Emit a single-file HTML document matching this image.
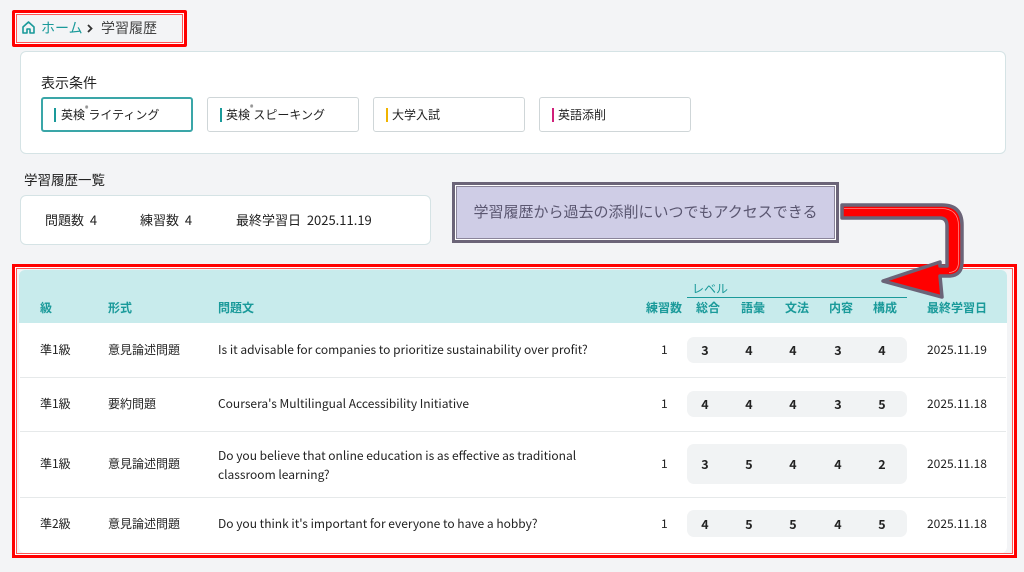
<!DOCTYPE html>
<html><head><meta charset="utf-8"><style>
*{margin:0;padding:0;box-sizing:border-box}
body{width:1024px;height:572px;background:#f3f4f6;font-family:"Noto Sans CJK JP","Liberation Sans",sans-serif;color:#222;position:relative;overflow:hidden;line-height:16px}
.a{position:absolute;white-space:nowrap}
.card{position:absolute;background:#fff;border:1px solid #d5e3e5;border-radius:6px}
.btn{position:absolute;top:97px;height:35px;width:152px;background:#fff;border:1px solid #cfd6d8;border-radius:3px;font-size:12px;line-height:33px;padding-left:18px}
.btn i{position:absolute;left:12px;top:10px;width:2px;height:14px}
.th{position:absolute;top:300px;font-size:12px;font-weight:bold;color:#1a9a9a;white-space:nowrap}
.c{transform:translateX(-50%)}
.row{position:absolute;left:20px;width:986px;border-bottom:1px solid #e6e9ea}
.t{position:absolute;font-size:12px;color:#222;white-space:nowrap}
.pill{position:absolute;left:667px;width:220px;background:#f1f3f4;border-radius:7px}
.n{position:absolute;font-size:12.5px;font-weight:bold;transform:translateX(-50%)}
sup{font-size:7px;vertical-align:top;line-height:20px}
</style></head><body>
<div class="a" style="left:12px;top:10px;width:175px;height:37px;border:3px solid #f00;border-radius:2px;box-shadow:inset 0 0 0 1px #fff,inset 0 0 0 2px #f55"></div>
<svg class="a" style="left:21px;top:20px" width="15" height="15" viewBox="0 0 15 15"><path d="M2 7L7.5 2L13 7V13H9V9H6V13H2Z" fill="none" stroke="#1a9a9a" stroke-width="1.6" stroke-linejoin="round"/></svg>
<div class="a" style="left:41px;top:20px;font-size:14px;color:#1a9a9a">ホーム</div>
<svg class="a" style="left:87px;top:24px" width="6" height="9" viewBox="0 0 6 9"><path d="M1 1L4.5 4.5L1 8" fill="none" stroke="#333" stroke-width="1.8"/></svg>
<div class="a" style="left:101px;top:20px;font-size:14px;color:#444">学習履歴</div>
<div class="card" style="left:20px;top:51px;width:986px;height:103px"></div>
<div class="a" style="left:41px;top:75px;font-size:14px">表示条件</div>
<div class="btn" style="left:41px;border:2px solid #3aa6a8;line-height:31px"><i style="background:#1a9a9a;left:11px;top:9px"></i>英検<sup>®</sup>ライティング</div>
<div class="btn" style="left:207px"><i style="background:#1a9a9a"></i>英検<sup>®</sup>スピーキング</div>
<div class="btn" style="left:373px"><i style="background:#f0b400"></i>大学入試</div>
<div class="btn" style="left:539px"><i style="background:#d0207a"></i>英語添削</div>
<div class="a" style="left:24px;top:171px;font-size:13.5px">学習履歴一覧</div>
<div class="card" style="left:20px;top:195px;width:411px;height:50px"></div>
<div class="a" style="left:45px;top:212px;font-size:13px">問題数&nbsp; 4</div>
<div class="a" style="left:140px;top:212px;font-size:13px">練習数&nbsp; 4</div>
<div class="a" style="left:236px;top:212px;font-size:13px">最終学習日&nbsp; 2025.11.19</div>
<div class="a" style="left:452px;top:182px;width:387px;height:61px;background:#cfcde6;border:3px solid #6b6478;box-shadow:inset 0 0 0 1px #fff,inset 0 0 0 2px #8a849a"></div>
<div class="a" style="left:452px;top:204px;width:387px;text-align:center;font-size:15px;color:#5a5670">学習履歴から過去の添削にいつでもアクセスできる</div>
<div class="a" style="left:12px;top:264px;width:1005px;height:294px;border:3px solid #f00;box-shadow:inset 0 0 0 1px #fff,inset 0 0 0 2px #f55"></div>
<div class="card" style="left:19px;top:270px;width:988px;height:283px;border:none;overflow:hidden">
<div style="position:absolute;left:0;top:0;width:988px;height:53px;background:#c8ebec"></div>
</div>
<div class="a" style="left:692px;top:281px;font-size:12px;color:#1a9a9a">レベル</div>
<div class="a" style="left:687px;top:297px;width:220px;height:1px;background:#1a9a9a"></div>
<div class="th" style="left:40px">級</div>
<div class="th" style="left:108px">形式</div>
<div class="th" style="left:218px">問題文</div>
<div class="th c" style="left:664px">練習数</div>
<div class="th c" style="left:708px">総合</div>
<div class="th c" style="left:753px">語彙</div>
<div class="th c" style="left:797px">文法</div>
<div class="th c" style="left:841px">内容</div>
<div class="th c" style="left:885px">構成</div>
<div class="th c" style="left:957px">最終学習日</div>

<div class="row" style="top:323px;height:55px">
<div class="t" style="left:20px;top:19px">準1級</div><div class="t" style="left:88px;top:19px">意見論述問題</div>
<div class="t" style="left:198px;top:19px">Is it advisable for companies to prioritize sustainability over profit?</div>
<div class="t" style="left:641px;top:19px">1</div>
<div class="pill" style="top:14px;height:26px"></div>
<div class="n" style="left:685px;top:19px">3</div><div class="n" style="left:729px;top:19px">4</div><div class="n" style="left:773px;top:19px">4</div><div class="n" style="left:818px;top:19px">3</div><div class="n" style="left:862px;top:19px">4</div>
<div class="t" style="left:907px;top:19px">2025.11.19</div></div>

<div class="row" style="top:378px;height:54px">
<div class="t" style="left:20px;top:18px">準1級</div><div class="t" style="left:88px;top:18px">要約問題</div>
<div class="t" style="left:198px;top:18px">Coursera's Multilingual Accessibility Initiative</div>
<div class="t" style="left:641px;top:18px">1</div>
<div class="pill" style="top:13px;height:26px"></div>
<div class="n" style="left:685px;top:18px">4</div><div class="n" style="left:729px;top:18px">4</div><div class="n" style="left:773px;top:18px">4</div><div class="n" style="left:818px;top:18px">3</div><div class="n" style="left:862px;top:18px">5</div>
<div class="t" style="left:907px;top:18px">2025.11.18</div></div>

<div class="row" style="top:432px;height:66px">
<div class="t" style="left:20px;top:24px">準1級</div><div class="t" style="left:88px;top:24px">意見論述問題</div>
<div class="t" style="left:198px;top:14px;line-height:19px">Do you believe that online education is as effective as traditional<br>classroom learning?</div>
<div class="t" style="left:641px;top:24px">1</div>
<div class="pill" style="top:12px;height:40px"></div>
<div class="n" style="left:685px;top:24px">3</div><div class="n" style="left:729px;top:24px">5</div><div class="n" style="left:773px;top:24px">4</div><div class="n" style="left:818px;top:24px">4</div><div class="n" style="left:862px;top:24px">2</div>
<div class="t" style="left:907px;top:24px">2025.11.18</div></div>

<div class="row" style="top:498px;height:53px;border:none">
<div class="t" style="left:20px;top:18px">準2級</div><div class="t" style="left:88px;top:18px">意見論述問題</div>
<div class="t" style="left:198px;top:18px">Do you think it's important for everyone to have a hobby?</div>
<div class="t" style="left:641px;top:18px">1</div>
<div class="pill" style="top:12px;height:27px"></div>
<div class="n" style="left:685px;top:18px">4</div><div class="n" style="left:729px;top:18px">5</div><div class="n" style="left:773px;top:18px">5</div><div class="n" style="left:818px;top:18px">4</div><div class="n" style="left:862px;top:18px">5</div>
<div class="t" style="left:907px;top:18px">2025.11.18</div></div>

<svg class="a" style="left:0;top:0" width="1024" height="572">
<path d="M842 205H942Q962 205 962 225V262Q962 275 950 276L940 276L942 297L883 281L940 262L940 266L947 266V226Q947 218 940 218H842Z" fill="#f00" stroke="#6b6478" stroke-width="3.5" stroke-linejoin="round"/>
<path d="M844 208.5H941Q958.5 208.5 958.5 226V262Q958.5 272 949 272.5" fill="none" stroke="#f88" stroke-width="0.8"/>
</svg>
</body></html>
